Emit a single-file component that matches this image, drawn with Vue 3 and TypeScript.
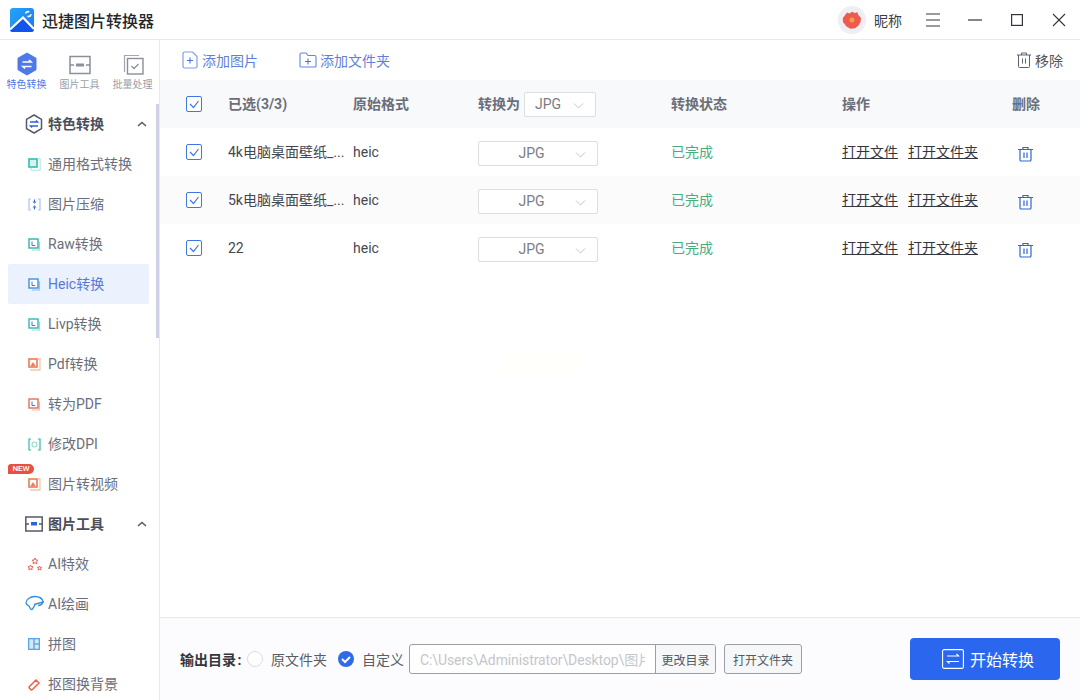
<script setup lang="ts">
interface MenuItem { label: string; icon: string; color: string; active?: boolean; badge?: boolean }
interface Section { name: string; kind: string; items: MenuItem[] }
const sections: Section[] = [
  {
    name: '特色转换',
    kind: 'hex',
    items: [
      { label: '通用格式转换', icon: 'general', color: '#2fbfb3' },
      { label: '图片压缩', icon: 'compress', color: '#5f8fe8' },
      { label: 'Raw转换', icon: 'doc', color: '#2fb3a8' },
      { label: 'Heic转换', icon: 'doc', color: '#3f8fe0', active: true },
      { label: 'Livp转换', icon: 'doc', color: '#2fb8b8' },
      { label: 'Pdf转换', icon: 'pdf', color: '#ee7a55' },
      { label: '转为PDF', icon: 'doc', color: '#e0705a' },
      { label: '修改DPI', icon: 'dpi', color: '#2fb8b0' },
      { label: '图片转视频', icon: 'pdf', color: '#ee7a55', badge: true },
    ],
  },
  {
    name: '图片工具',
    kind: 'frame',
    items: [
      { label: 'AI特效', icon: 'stars', color: '#e8604c' },
      { label: 'AI绘画', icon: 'paint', color: '#2f8fe0' },
      { label: '拼图', icon: 'grid', color: '#5aa5e8' },
      { label: '抠图换背景', icon: 'brush', color: '#e8604c' },
    ],
  },
]
const rows = [
  { name: '4k电脑桌面壁纸_...' },
  { name: '5k电脑桌面壁纸_...' },
  { name: '22' },
]
</script>

<template>
  <div class="app">
    <header class="titlebar">
      <svg class="logo" width="24" height="24" viewBox="0 0 24 24">
        <defs>
          <linearGradient id="lg" x1="0" y1="0" x2="1" y2="1">
            <stop offset="0" stop-color="#25a5f5" />
            <stop offset="1" stop-color="#1a78f2" />
          </linearGradient>
        </defs>
        <rect width="24" height="24" rx="3" fill="url(#lg)" />
        <path d="M0 22.500 L13 10 L24 21 V21a3 3 0 0 1-3 3H3a3 3 0 0 1-3-1.500z" fill="#1255ee" />
        <path d="M0 21.500 L13 9.500 L24 21" fill="none" stroke="#fff" stroke-width="2.200" />
        <path d="M15.500 5.500a3.200 3.200 0 0 1 3.800-1.700M21.200 6.200a3.200 3.200 0 0 1-3.800 2.200" fill="none" stroke="#fff" stroke-width="1.500" />
      </svg>
      <span class="app-name">迅捷图片转换器</span>
      <span class="spacer"></span>
      <span class="avatar">
        <svg width="20" height="20" viewBox="0 0 20 20">
          <path d="M5 2.500L7.500 3.500 10 1.800l2.800 1.200 2.700-.7.800 2.700 2.700 3-.5 4-2 3.500-3.500 2.800-4.500.4-4-2.300L1 12l-.2-4 2-2.500z" fill="#ef5a50" />
          <circle cx="10" cy="10" r="2.500" fill="#f0a040" />
        </svg>
      </span>
      <span class="nick">昵称</span>
      <svg class="win menu-ic" width="14" height="14" viewBox="0 0 14 14"><path d="M0 1h14M0 7h14M0 13h14" stroke="#33363d" stroke-width="1" /></svg>
      <svg class="win min-ic" width="14" height="14" viewBox="0 0 14 14"><path d="M0 7h14" stroke="#33363d" stroke-width="1.200" /></svg>
      <svg class="win max-ic" width="12" height="12" viewBox="0 0 12 12"><rect x=".6" y=".6" width="10.800" height="10.800" fill="none" stroke="#33363d" stroke-width="1.200" /></svg>
      <svg class="win close-ic" width="14" height="14" viewBox="0 0 14 14"><path d="M1 1l12 12M13 1L1 13" stroke="#33363d" stroke-width="1.100" /></svg>
    </header>

    <div class="body">
      <aside class="sidebar">
        <div class="tabs">
          <div class="tab tab-on">
            <svg width="20" height="24" viewBox="0 0 20 24">
              <path d="M10 1l9 5.200v11.600L10 23l-9-5.200V6.200z" fill="#4f79e8" stroke="#4f79e8" stroke-linejoin="round" />
              <path d="M5.500 10h8.500l-2-2M14.500 14.500H6l2 2" fill="none" stroke="#fff" stroke-width="1.700" />
            </svg>
            <span>特色转换</span>
          </div>
          <div class="tab">
            <svg width="24" height="24" viewBox="0 0 24 24">
              <rect x="2" y="4.500" width="20" height="17" fill="none" stroke="#8b8f9c" stroke-width="1.500" />
              <path d="M2 13h4M18 13h4" stroke="#8b8f9c" stroke-width="1.500" />
              <rect x="8" y="11.500" width="8" height="3" fill="#8b8f9c" />
            </svg>
            <span>图片工具</span>
          </div>
          <div class="tab">
            <svg width="24" height="24" viewBox="0 0 24 24">
              <path d="M18 3.500H3.500V20" fill="none" stroke="#a4a7b2" stroke-width="1.200" />
              <rect x="6.500" y="6.500" width="15.500" height="15.500" fill="none" stroke="#8b8f9c" stroke-width="1.400" />
              <path d="M10.500 14l2.500 2.500 4.500-4.500" fill="none" stroke="#8b8f9c" stroke-width="1.300" />
            </svg>
            <span>批量处理</span>
          </div>
        </div>

        <div class="nav">
          <div class="nav-scroll"></div>
          <template v-for="s in sections" :key="s.name">
            <div class="section">
              <svg v-if="s.kind === 'hex'" width="18" height="20" viewBox="0 0 18 20">
                <path d="M9 1l7.500 4.300v9.400L9 19l-7.500-4.300V5.300z" fill="none" stroke="#555a68" stroke-width="1.500" stroke-linejoin="round" />
                <path d="M5 8h7.500l-1.500-1.500M13 12H5.500L7 13.500" fill="none" stroke="#2f62d8" stroke-width="1.500" />
              </svg>
              <svg v-else width="18" height="16" viewBox="0 0 18 16">
                <rect x=".8" y="1" width="16.400" height="14" fill="none" stroke="#555a68" stroke-width="1.500" />
                <path d="M1 8h3M14 8h3" stroke="#555a68" stroke-width="1.500" />
                <rect x="6" y="6" width="6" height="3.500" fill="#2f62d8" />
              </svg>
              <span class="section-name">{{ s.name }}</span>
              <svg class="chev" width="10" height="6" viewBox="0 0 10 6"><path d="M1 5l4-3.500L9 5" fill="none" stroke="#555a68" stroke-width="1.500" /></svg>
            </div>
            <div v-for="m in s.items" :key="m.label" class="item" :class="{ active: m.active }">
              <em v-if="m.badge" class="badge">NEW</em>
              <span class="ic">
                <svg v-if="m.icon === 'general'" width="13" height="13" viewBox="0 0 13 13">
                  <rect x="1" y="1" width="8" height="8" fill="#d6f3f0" :stroke="m.color" stroke-width="1.600" />
                  <path d="M9.500 .800h2.700v11.400H3V10" fill="none" :stroke="m.color" stroke-opacity=".4" stroke-width="1" />
                </svg>
                <svg v-else-if="m.icon === 'compress'" width="13" height="13" viewBox="0 0 13 13">
                  <path d="M3 1H1v11h2M10 1h2v11h-2" fill="none" :stroke="m.color" stroke-opacity=".55" stroke-width="1.200" />
                  <path d="M6.500 1.500v3M6.500 8.500v3M4.800 3.500l1.700 1.500 1.700-1.500M4.800 9.500l1.700-1.500 1.700 1.500" fill="none" stroke="#2f62d8" stroke-width="1" />
                </svg>
                <svg v-else-if="m.icon === 'pdf'" width="13" height="13" viewBox="0 0 13 13">
                  <rect x="1" y="1" width="8" height="8" fill="#fff" :stroke="m.color" stroke-width="1.600" />
                  <path d="M2.500 8l2.500-4 2.500 4z" :fill="m.color" />
                  <path d="M10 1h2v11H3v-1" fill="none" stroke="#f5c8a8" stroke-width="1.300" />
                </svg>
                <svg v-else-if="m.icon === 'dpi'" width="13" height="13" viewBox="0 0 13 13">
                  <path d="M3 1H1v11h2M10 1h2v11h-2" fill="none" :stroke="m.color" stroke-width="1.200" />
                  <circle cx="6.500" cy="6.500" r="2.500" fill="none" stroke="#9ad8d0" stroke-width="1.100" />
                </svg>
                <svg v-else-if="m.icon === 'stars'" width="16" height="15" viewBox="0 0 16 15" class="wide">
                  <path d="M8 1l1 2 2 .3-1.500 1.400.4 2L8 5.700l-1.900 1 .4-2L5 3.300 7 3zM3.500 8l.8 1.600 1.700.2-1.200 1.200.3 1.700-1.600-.8-1.600.8.300-1.700L1 9.800l1.700-.2zM12.500 9l.7 1.300 1.500.2-1.100 1 .3 1.500-1.400-.7-1.400.7.300-1.500-1.100-1 1.500-.2z" fill="none" :stroke="m.color" stroke-width="1" />
                </svg>
                <svg v-else-if="m.icon === 'paint'" width="20" height="18" viewBox="0 0 20 18" class="wider">
                  <path d="M18.500 7.500C17.500 3.500 14 1.500 10 1.500 5 1.500 1 4.500 1 8c0 1.500 2 2.200 3 3 1 .8.700 3.500 2.500 3.500 1.500 0 2-2.500 3.500-4.500" fill="none" :stroke="m.color" stroke-width="1.300" />
                  <path d="M9 9.500l9-2.500c-1 3-3 3.500-5 3.500" fill="none" :stroke="m.color" stroke-width="1.300" />
                </svg>
                <svg v-else-if="m.icon === 'grid'" width="12" height="12" viewBox="0 0 12 12">
                  <rect width="12" height="12" :fill="m.color" />
                  <rect x="1.300" y="1.300" width="4" height="9.400" fill="#d4e8fa" />
                  <rect x="6.700" y="1.300" width="4" height="4" fill="#d4e8fa" />
                  <rect x="6.700" y="6.700" width="4" height="4" fill="#d4e8fa" />
                </svg>
                <svg v-else-if="m.icon === 'brush'" width="14" height="14" viewBox="0 0 14 14">
                  <path d="M1.500 9.500L8 3l3 3-6.500 6.500a1.500 1.500 0 0 1-2-.2l-1-1a1.500 1.500 0 0 1 0-1.800z" fill="none" :stroke="m.color" stroke-width="1.500" />
                  <path d="M10 1.500l.8.800M12 3.500l.8.800" stroke="#f0c080" stroke-width="1" />
                </svg>
                <svg v-else width="13" height="13" viewBox="0 0 13 13">
                  <rect x="1" y="1" width="9" height="9" fill="#fff" :stroke="m.color" stroke-width="1.400" />
                  <path d="M11.500 3.500V12H4" fill="none" :stroke="m.color" stroke-opacity=".5" stroke-width="1.100" />
                  <path d="M4 3.500v4h3" fill="none" stroke="#3a78d8" stroke-width="1" />
                </svg>
              </span>
              <span>{{ m.label }}</span>
            </div>
          </template>
        </div>
      </aside>

      <main class="main">
        <div class="toolbar">
          <span class="tool">
            <svg width="16" height="18" viewBox="0 0 16 18">
              <path d="M10.500 1H2.500A1.500 1.500 0 0 0 1 2.500v13A1.500 1.500 0 0 0 2.500 17h11a1.500 1.500 0 0 0 1.500-1.500V5.500z" fill="none" stroke="#7f9fe8" stroke-width="1.200" />
              <path d="M5 9.500h6M8 6.500v6" stroke="#4a72d8" stroke-width="1.100" />
            </svg>
            添加图片
          </span>
          <span class="tool tool2">
            <svg width="18" height="16" viewBox="0 0 18 16">
              <path d="M1 14V2.500A1.500 1.500 0 0 1 2.500 1h4.500l2 2.500h6.500A1.500 1.500 0 0 1 17 5v9a1 1 0 0 1-1 1H2a1 1 0 0 1-1-1z" fill="none" stroke="#5f85e0" stroke-width="1.100" />
              <path d="M6 9.500h6M9 6.500v6" stroke="#4a72d8" stroke-width="1.100" />
            </svg>
            添加文件夹
          </span>
          <span class="spacer"></span>
          <span class="remove">
            <svg width="14" height="16" viewBox="0 0 14 16">
              <path d="M0 3h14M4.500 3V1h5v2M1.500 3v11.500a1 1 0 0 0 1 1h9a1 1 0 0 0 1-1V3M5.500 6.500v5M8.500 6.500v5" fill="none" stroke="#5c6068" stroke-width="1" />
            </svg>
            移除
          </span>
        </div>

        <div class="grid head">
          <span class="check"><svg width="14" height="14" viewBox="0 0 14 14"><path d="M3 7l3.500 3.500L11.500 4" fill="none" stroke="#3f78e0" stroke-width="1.200" /></svg></span>
          <span>已选(3/3)</span>
          <span>原始格式</span>
          <span class="conv">转换为
            <span class="select small"><span>JPG</span><svg width="11" height="6" viewBox="0 0 11 6"><path d="M1 .5l4.500 4.500L10 .500" fill="none" stroke="#c2c5cc" /></svg></span>
          </span>
          <span>转换状态</span>
          <span>操作</span>
          <span>删除</span>
        </div>

        <div v-for="(r, i) in rows" :key="i" class="grid row" :class="{ alt: i === 1 }">
          <span class="check"><svg width="14" height="14" viewBox="0 0 14 14"><path d="M3 7l3.500 3.500L11.500 4" fill="none" stroke="#3f78e0" stroke-width="1.200" /></svg></span>
          <span class="name">{{ r.name }}</span>
          <span class="fmt">heic</span>
          <span class="select wide-sel"><span>JPG</span><svg width="11" height="6" viewBox="0 0 11 6"><path d="M1 .5l4.500 4.500L10 .500" fill="none" stroke="#c2c5cc" /></svg></span>
          <span class="done">已完成</span>
          <span class="links"><u>打开文件</u><u>打开文件夹</u></span>
          <span class="del">
            <svg width="15" height="16" viewBox="0 0 15 16">
              <path d="M0 3.500h15M5 3.500V1.500h5v2M2 3.500v10.500a1 1 0 0 0 1 1h9a1 1 0 0 0 1-1V3.500M6 6.500v5.500M9 6.500v5.500" fill="none" stroke="#2f66d4" stroke-width="1.200" />
            </svg>
          </span>
        </div>

        <div class="fill"><i class="ghost"></i></div>

        <footer class="footer">
          <b class="out">输出目录 :</b>
          <span class="radio"></span>
          <span class="rlabel">原文件夹</span>
          <svg class="rchk" width="16" height="16" viewBox="0 0 16 16">
            <circle cx="8" cy="8" r="8" fill="#2f6ae8" />
            <path d="M4 8l3 3 5-5" fill="none" stroke="#fff" stroke-width="2" />
          </svg>
          <span class="rlabel">自定义</span>
          <div class="path">
            <span class="path-text">C:\Users\Administrator\Desktop\图片</span>
            <span class="path-btn">更改目录</span>
          </div>
          <span class="open">打开文件夹</span>
          <span class="spacer"></span>
          <span class="start">
            <svg width="22" height="20" viewBox="0 0 22 20">
              <rect x=".6" y=".6" width="20.800" height="18.800" rx="1.500" fill="none" stroke="#fff" stroke-width="1.100" />
              <path d="M5 7h11.500l-2-2M17 12.500H5.500l2 2" fill="none" stroke="#fff" stroke-width="1.200" />
            </svg>
            开始转换
          </span>
        </footer>
      </main>
    </div>
  </div>
</template>

<style scoped>
.app {
  width: 1080px;
  height: 700px;
  display: flex;
  flex-direction: column;
  overflow: hidden;
  background: #fff;
  font-family: Roboto, "Noto Sans CJK SC", sans-serif;
  font-size: 14px;
  color: #33363d;
}
.spacer { flex: 1; }
.titlebar {
  height: 40px;
  box-sizing: border-box;
  flex: none;
  display: flex;
  align-items: center;
  padding: 0 14px 0 10px;
  border-bottom: 1px solid #e8e9ec;
}
.logo { flex: none; }
.app-name { margin-left: 8px; font-size: 16px; font-weight: 500; color: #24272e; }
.avatar {
  width: 28px;
  height: 28px;
  border-radius: 50%;
  background: #eeeef3;
  display: flex;
  align-items: center;
  justify-content: center;
}
.nick { margin-left: 8px; font-size: 14px; color: #3a3d45; }
.win { flex: none; }
.menu-ic { margin-left: 24px; }
.min-ic { margin-left: 28px; }
.max-ic { margin-left: 29px; }
.close-ic { margin-left: 29px; }

.body { flex: 1; display: flex; min-height: 0; }
.sidebar {
  width: 160px;
  flex: none;
  box-sizing: border-box;
  border-right: 1px solid #e8e9ee;
  display: flex;
  flex-direction: column;
  overflow: hidden;
}
.tabs { height: 64px; flex: none; display: flex; padding-top: 12px; box-sizing: border-box; background: #fff; }
.tab { width: 53px; display: flex; flex-direction: column; align-items: center; gap: 2px; font-size: 10px; line-height: 14px; color: #9b9ea8; }
.tab-on { color: #4f79e8; }
.nav { position: relative; flex: 1; min-height: 0; overflow: hidden; }
.nav-scroll { position: absolute; right: 0; top: 0; width: 3px; height: 234px; background: #cfd0e6; }
.section { height: 40px; display: flex; align-items: center; padding-left: 25px; position: relative; }
.section-name { position: absolute; left: 48px; top: 10px; line-height: 20px; font-size: 14px; font-weight: 700; color: #4a4e5a; }
.chev { position: absolute; left: 137px; top: 17px; }
.item {
  height: 40px;
  margin: 0 10px 0 8px;
  padding-left: 20px;
  display: flex;
  align-items: center;
  font-size: 14px;
  line-height: 20px;
  color: #6a6e7a;
  position: relative;
  border-radius: 2px;
}
.item.active { background: #ebf1fd; color: #5a78d8; }
.ic { width: 20px; flex: none; display: flex; align-items: center; }
.ic .wide { margin-left: -1px; }
.ic .wider { margin-left: -3px; }
.badge {
  position: absolute;
  left: 0;
  top: 0;
  height: 10px;
  width: 26px;
  border-radius: 3px 5px 5px 0;
  background: #e8513f;
  color: #fff;
  font-style: normal;
  font-size: 8px;
  line-height: 10px;
  text-align: center;
  font-weight: 500;
}

.main { flex: 1; min-width: 0; display: flex; flex-direction: column; }
.toolbar { height: 40px; flex: none; display: flex; align-items: center; padding: 0 17px 0 22px; }
.tool { display: flex; align-items: center; gap: 4px; font-size: 14px; color: #5f7fd8; }
.tool2 { margin-left: 41px; gap: 3px; }
.remove { display: flex; align-items: center; gap: 4px; font-size: 14px; color: #50545c; }
.grid {
  display: grid;
  grid-template-columns: 42px 125px 125px 193px 171px 170px 1fr;
  align-items: center;
  height: 48px;
  padding-left: 26px;
  font-size: 14px;
  line-height: 20px;
  flex: none;
}
.head { background: #f8f9fb; font-weight: 700; color: #6a6e7a; }
.alt { background: #fbfbfc; }
.check {
  width: 16px;
  height: 16px;
  box-sizing: border-box;
  border: 1px solid #3f78e0;
  border-radius: 2px;
  display: flex;
  align-items: center;
  justify-content: center;
  background: #fff;
}
.name, .fmt { color: #44474f; }
.conv { display: flex; align-items: center; gap: 4px; }
.select {
  width: 120px;
  height: 25px;
  box-sizing: border-box;
  border: 1px solid #dcdee2;
  border-radius: 2px;
  display: flex;
  align-items: center;
  background: #fff;
  font-weight: 400;
  color: #7a7d85;
  font-size: 14px;
  position: relative;
  justify-content: center;
  padding-right: 13px;
}
.select svg { position: absolute; right: 11px; top: 10px; }
.select.wide-sel { margin-top: 2px; }
.select.small { width: 72px; justify-content: flex-start; padding-left: 10px; padding-right: 0; }
.done { color: #4aab7f; }
.links { display: flex; gap: 10px; color: #33363d; }
.del { padding-left: 6px; padding-top: 4px; display: flex; }
.fill { flex: 1; position: relative; }
.ghost { position: absolute; left: 340px; top: 78px; width: 80px; height: 28px; background: #fffffb; }
.footer {
  height: 83px;
  flex: none;
  box-sizing: border-box;
  border-top: 1px solid #e6e7ea;
  background: #fcfcfe;
  display: flex;
  align-items: center;
  padding: 0 20px;
}
.out { font-size: 14px; color: #33363d; font-weight: 700; width: 66px; flex: none; white-space: nowrap; word-spacing: -2px; }
.radio { width: 16px; height: 16px; box-sizing: border-box; border: 1px solid #dcdde2; border-radius: 50%; background: #fff; flex: none; margin-left: 1px; }
.rlabel { font-size: 14px; color: #5a5d65; margin-left: 8px; }
.rchk { margin-left: 11px; flex: none; }
.path {
  margin-left: 5px;
  width: 307px;
  height: 30px;
  box-sizing: border-box;
  border: 1px solid #9c9ea6;
  border-radius: 3px;
  display: flex;
  align-items: center;
  background: #fff;
  overflow: hidden;
  flex: none;
}
.path-text { width: 235px; margin-right: 10px; flex: none; padding-left: 10px; box-sizing: border-box; overflow: hidden; white-space: nowrap; font-size: 14px; letter-spacing: -0.1px; color: #c4c6cc; }
.path-btn { flex: 1; height: 100%; border-left: 1px solid #9c9ea6; display: flex; align-items: center; justify-content: center; background: #f6f7f9; font-size: 12px; color: #55585f; }
.open {
  margin-left: 8px;
  width: 78px;
  height: 30px;
  box-sizing: border-box;
  border: 1px solid #9c9ea6;
  border-radius: 3px;
  background: #f6f7f9;
  display: flex;
  align-items: center;
  justify-content: center;
  font-size: 12px;
  color: #55585f;
  flex: none;
}
.start {
  width: 150px;
  height: 42px;
  box-sizing: border-box;
  padding-left: 6px;
  border-radius: 4px;
  background: #2a66ee;
  color: #fff;
  font-size: 16px;
  display: flex;
  align-items: center;
  justify-content: center;
  gap: 6px;
  flex: none;
}
</style>
